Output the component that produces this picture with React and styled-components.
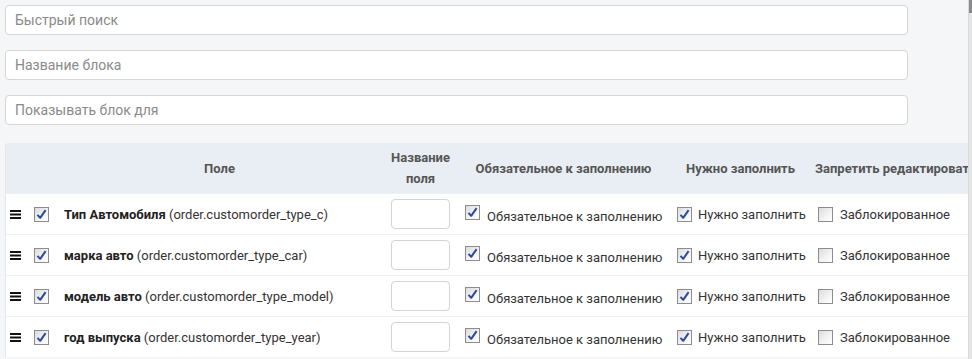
import React from 'react';
import styled, { createGlobalStyle } from 'styled-components';

const Global = createGlobalStyle`
  html, body { margin: 0; padding: 0; background: #f5f6f8; }
  body { font-family: Roboto, "Liberation Sans", Arial, sans-serif; overflow: hidden; }
`;

const Page = styled.div`
  display: flex;
  height: 359px;
`;

const Main = styled.div`
  flex: 1;
  min-width: 0;
  padding: 5px 0 0 5px;
  display: flex;
  flex-direction: column;
  overflow: hidden;
`;

const ScrollTrack = styled.div`
  width: 3px;
  background: #e6e6e6;
  border-left: 1px solid #d8d8d8;
  display: flex;
  flex-direction: column;
`;

const ScrollThumb = styled.div`
  height: 13px;
  background: #8a8a8a;
`;

const Search = styled.input`
  box-sizing: border-box;
  width: 903px;
  height: 30px;
  margin-bottom: 15px;
  padding: 0 9px;
  border: 1px solid #d6d6d6;
  border-radius: 4px;
  background: #fff;
  font-family: Roboto, "Liberation Sans", sans-serif;
  font-size: 14px;
  color: #333;
  outline: none;
  &::placeholder { color: #8a8a8a; }
`;

const TableWrap = styled.div`
  margin-top: 3px;
  overflow: hidden;
  border-left: 1px solid #e3e7ec;
  border-radius: 3px 0 0 0;
  background: #fff;
`;

const Table = styled.table`
  border-collapse: collapse;
  table-layout: fixed;
  width: 1100px;
  font-size: 13px;
`;

const Th = styled.th`
  background: #e8eef4;
  color: #555;
  font-weight: 700;
  font-size: 13px;
  height: 50px;
  padding: 0 8px;
  text-align: center;
  white-space: ${p => (p.$wrap ? 'normal' : 'nowrap')};
  line-height: 21px;
  overflow: hidden;
  ${p => p.$left && 'text-align: left; padding-left: 3px;'}
`;

const Tr = styled.tr`
  border-top: 1px solid #eef0f2;
`;

const Td = styled.td`
  height: 40px;
  padding: 0 ${p => p.$pad ?? 8}px;
  color: #333;
  white-space: nowrap;
  vertical-align: middle;
`;

const FieldName = styled.b`
  color: #222;
`;

const NameInput = styled.input`
  box-sizing: border-box;
  width: 59px;
  height: 30px;
  border: 1px solid #d4d4d4;
  border-radius: 4px;
  background: #fff;
  outline: none;
  display: block;
`;

const Label = styled.label`
  display: flex;
  align-items: center;
  gap: ${p => p.$gap ?? 8}px;
  color: #333;
  font-size: 13px;
  ${p => p.$low && 'padding-top: 4px;'}
`;

const Box = styled.span`
  box-sizing: border-box;
  flex: none;
  width: 15px;
  height: 15px;
  border: 1px solid #8d8d8d;
  background: linear-gradient(135deg, #dcdcdc 0%, #f4f4f4 60%, #fff 100%);
  display: flex;
  align-items: center;
  justify-content: center;
  ${p => p.$up && 'margin-top: -8px;'}
`;

const Handle = () => (
  <svg width="11" height="9" viewBox="0 0 11 9">
    <rect x="0" y="0" width="11" height="2" fill="#111" />
    <rect x="0" y="3.5" width="11" height="2" fill="#111" />
    <rect x="0" y="7" width="11" height="2" fill="#111" />
  </svg>
);

const Check = ({ checked, up }) => (
  <Box $up={up}>
    {checked && (
      <svg width="11" height="11" viewBox="0 0 11 11">
        <path d="M1.5 5.8 L4.2 8.8 L9.6 1.2" fill="none" stroke="#2c4a9a" strokeWidth="2" strokeLinejoin="round" />
      </svg>
    )}
  </Box>
);

const rows = [
  { name: 'Тип Автомобиля', code: 'order.customorder_type_c' },
  { name: 'марка авто', code: 'order.customorder_type_car' },
  { name: 'модель авто', code: 'order.customorder_type_model' },
  { name: 'год выпуска', code: 'order.customorder_type_year' },
];

export default function App() {
  return (
    <Page>
      <Global />
      <Main>
        <Search placeholder="Быстрый поиск" />
        <Search placeholder="Название блока" />
        <Search placeholder="Показывать блок для" />
        <TableWrap>
          <Table>
            <colgroup>
              <col style={{ width: 22 }} />
              <col style={{ width: 28 }} />
              <col style={{ width: 327 }} />
              <col style={{ width: 75 }} />
              <col style={{ width: 211 }} />
              <col style={{ width: 143 }} />
              <col style={{ width: 294 }} />
            </colgroup>
            <thead>
              <tr>
                <Th />
                <Th />
                <Th>Поле</Th>
                <Th $wrap>Название поля</Th>
                <Th>Обязательное к заполнению</Th>
                <Th>Нужно заполнить</Th>
                <Th $left>Запретить редактировать</Th>
              </tr>
            </thead>
            <tbody>
              {rows.map(r => (
                <Tr key={r.code}>
                  <Td $pad={4}><Handle /></Td>
                  <Td $pad={6}><Check checked /></Td>
                  <Td $pad={8}>
                    <FieldName>{r.name}</FieldName> ({r.code})
                  </Td>
                  <Td $pad={8}><NameInput /></Td>
                  <Td $pad={7}>
                    <Label $low $gap={7}>
                      <Check checked up />
                      Обязательное к заполнению
                    </Label>
                  </Td>
                  <Td $pad={8}>
                    <Label $gap={6}>
                      <Check checked />
                      Нужно заполнить
                    </Label>
                  </Td>
                  <Td $pad={6}>
                    <Label $gap={7}>
                      <Check />
                      Заблокированное
                    </Label>
                  </Td>
                </Tr>
              ))}
            </tbody>
          </Table>
        </TableWrap>
      </Main>
      <ScrollTrack>
        <ScrollThumb />
      </ScrollTrack>
    </Page>
  );
}
